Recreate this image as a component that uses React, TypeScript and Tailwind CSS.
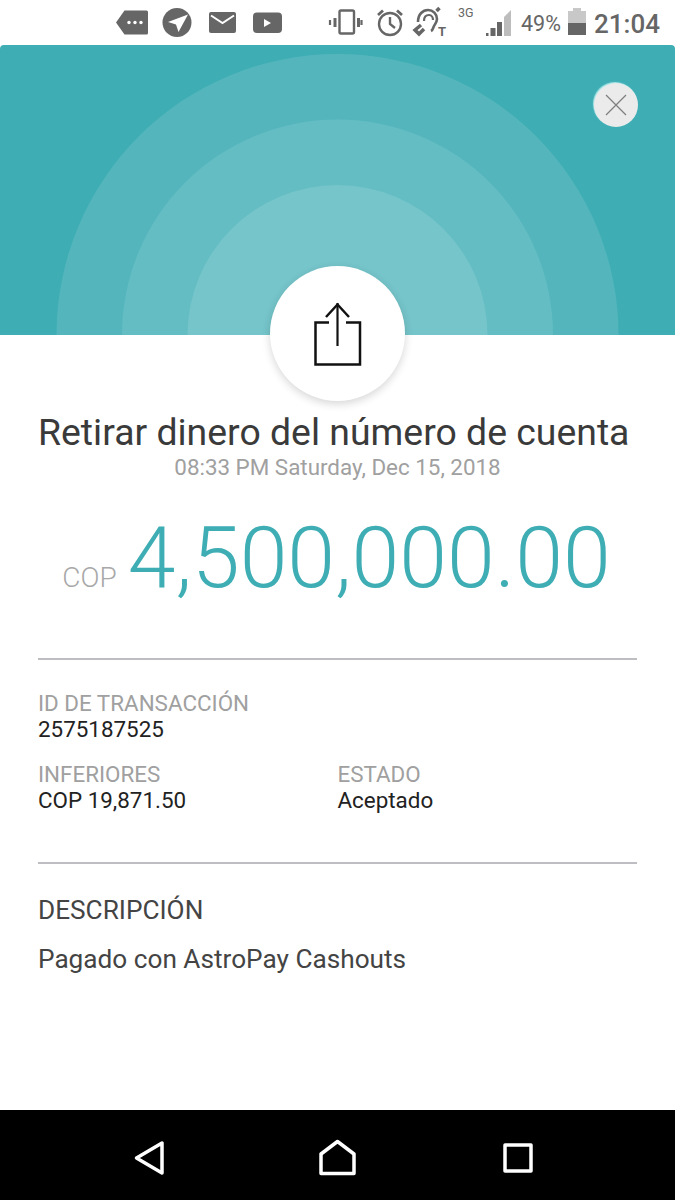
const G = "#666666";

function StatusIcons() {
  return (
    <svg width="342" height="45" viewBox="0 0 342 45" className="shrink-0">
      <path d="M116 22.500 L124.500 10.500 H146.500 a1.500 1.500 0 0 1 1.500 1.500 V33 a1.500 1.500 0 0 1 -1.500 1.500 H124.500 Z" fill={G} />
      <circle cx="129" cy="22.500" r="1.700" fill="#fff" /><circle cx="135" cy="22.500" r="1.700" fill="#fff" /><circle cx="141" cy="22.500" r="1.700" fill="#fff" />
      <circle cx="177" cy="22.500" r="14.500" fill={G} />
      <path d="M168 22 L188 14.500 L178.500 32 L176 24.500 Z" fill="#fff" />
      <rect x="209" y="12" width="27" height="21" rx="2" fill={G} />
      <path d="M211 15.500 L222.500 23 L234 15.500" fill="none" stroke="#fff" strokeWidth="2" />
      <rect x="253" y="12.500" width="29" height="20.500" rx="4" fill={G} />
      <path d="M264 19 L271 23 L264 27 Z" fill="#fff" />
    </svg>
  );
}

function Status2() {
  return (
    <svg width="120" height="45" viewBox="327 0 120 45" className="shrink-0">
      <g fill="none" stroke={G} strokeWidth="2.400">
        <rect x="339.500" y="10.500" width="14.500" height="23" rx="1.500" />
        <path d="M335 18v9M358.500 18v9" strokeWidth="3" />
        <path d="M330 20v5M361.500 20v5" strokeWidth="2.200" />
        <circle cx="390" cy="24" r="11" />
        <path d="M390 17v7l5 4" />
        <path d="M378 15l5-4.500M397 10.500l5 4.500" strokeWidth="2.800" />
        <path d="M418 22c0-8 5-12 10-12 5 0 9 4 9 9 0 3-2 5-3 7-1 2-1 4-3 5" strokeWidth="2.600" />
        <path d="M424 21c0-4 2-6 5-6s4 3 4 5" strokeWidth="2.200" />
        <path d="M421 25l-6 5 4 4 5-5" strokeWidth="3.500" />
        <path d="M436.500 11l3-3" strokeWidth="3.500" />
      </g>
    </svg>
  );
}

function Signal() {
  return (
    <svg width="26" height="26" viewBox="0 0 26 26" className="shrink-0">
      <rect x="0" y="23" width="2.500" height="3" fill={G} />
      <rect x="4.500" y="18" width="5" height="8" fill={G} />
      <rect x="11" y="12" width="5" height="14" fill={G} />
      <path d="M18 7 L25 0 V26 H18 Z" fill="#bdbdbd" />
    </svg>
  );
}

export default function App() {
  return (
    <div className="flex h-[1200px] w-[675px] flex-col overflow-hidden bg-white font-['Roboto',sans-serif]">
      <div className="relative flex h-[45px] shrink-0 items-center bg-white">
        <div className="absolute left-0 top-0"><StatusIcons /></div>
        <div className="absolute left-[327px] top-0"><Status2 /></div>
        <span className="absolute left-[438px] top-[26px] text-[13px] font-bold leading-[12px] text-[#666]">T</span>
        <span className="absolute left-[458px] top-[6px] text-[12.500px] leading-[14px] text-[#666]">3G</span>
        <div className="absolute left-[486px] top-[10px]"><Signal /></div>
        <span className="absolute left-[521px] top-[11px] text-[21.500px] leading-[26px] text-[#666]">49%</span>
        <svg width="18" height="27" viewBox="0 0 18 27" className="absolute left-[568px] top-[8px]">
          <path d="M5 0h8v3h5v24H0V3h5z" fill="#c8c8c8" />
          <rect x="0" y="15" width="18" height="12" fill={G} />
        </svg>
        <span className="absolute left-[594px] top-[8px] text-[26px] font-medium leading-[32px] text-[#666]">21:04</span>
      </div>

      <div className="flex min-h-0 flex-1 flex-col overflow-hidden rounded-t-[4px] bg-white">
        <div className="relative h-[290px] shrink-0 overflow-hidden bg-[#3eadb4]">
          <svg width="675" height="290" viewBox="0 0 675 290" className="absolute inset-0">
            <circle cx="337.500" cy="290" r="281" fill="#54b6bc" />
            <circle cx="337.500" cy="290" r="215.500" fill="#64bdc3" />
            <circle cx="337.500" cy="290" r="150" fill="#75c5ca" />
          </svg>
          <button className="absolute left-[594px] top-[38px] flex h-[44px] w-[44px] items-center justify-center rounded-full bg-[#ebebeb] shadow-[-1px_-1px_1px_rgba(200,245,245,0.8)]">
            <svg width="22" height="22" viewBox="0 0 22 22">
              <path d="M1 1 L21 21 M21 1 L1 21" stroke="#808080" strokeWidth="1.300" />
            </svg>
          </button>
        </div>

        <div className="relative flex flex-1 flex-col px-[38px]">
          <div className="absolute left-[270px] top-[-69px] flex h-[135px] w-[135px] items-center justify-center rounded-full bg-white shadow-[0_3px_8px_rgba(0,0,0,0.16)]">
            <svg width="48" height="64" viewBox="0 0 48 64" fill="none" stroke="#111" strokeWidth="2.200">
              <path d="M15 20.500 H1.500 V62.500 H46 V20.500 H32" strokeWidth="2.500" />
              <path d="M23.500 1 V44" />
              <path d="M12 15 L23.500 2.500 L35 15" strokeWidth="2.500" />
            </svg>
          </div>

          <div className="mt-[73px] whitespace-nowrap text-[37.400px] leading-[48px] text-[#3a3a3a]">Retirar dinero del número de cuenta</div>
          <div className="-mt-px text-center text-[22.400px] leading-[24px] text-[#a0a0a0]">08:33 PM Saturday, Dec 15, 2018</div>

          <div className="mt-[29px] flex h-[100px] items-baseline justify-center pr-[2px]">
            <span className="mr-[11px] text-[28px] font-light text-[#a8a8a8]">COP</span>
            <span className="text-[86px] font-light leading-[100px] text-[#3eadb4]">4,500,000.00</span>
          </div>

          <div className="mt-[50px] h-[2px] bg-[#bdbdc2]" />

          <div className="mt-[30px] text-[22.400px] leading-[26px] text-[#a0a0a0]">ID DE TRANSACCIÓN</div>
          <div className="text-[22.400px] leading-[26px] text-[#222]">2575187525</div>

          <div className="mt-[19px] grid grid-cols-2">
            <div>
              <div className="text-[22.400px] leading-[26px] text-[#a0a0a0]">INFERIORES</div>
              <div className="text-[22.400px] leading-[26px] text-[#222]">COP 19,871.50</div>
            </div>
            <div>
              <div className="text-[22.400px] leading-[26px] text-[#a0a0a0]">ESTADO</div>
              <div className="text-[22.400px] leading-[26px] text-[#222]">Aceptado</div>
            </div>
          </div>

          <div className="mt-[49px] h-[2px] bg-[#bdbdc2]" />

          <div className="mt-[31px] text-[26.200px] leading-[30px] text-[#444]">DESCRIPCIÓN</div>
          <div className="mt-[19px] text-[26.200px] leading-[30px] text-[#444]">Pagado con AstroPay Cashouts</div>
        </div>
      </div>

      <div className="flex h-[90px] shrink-0 items-center bg-black">
        <svg width="675" height="90" viewBox="0 0 675 90" fill="none" stroke="#fff" strokeWidth="3.500" strokeLinejoin="round">
          <path d="M162 33 V63 L136.500 48 Z" />
          <path d="M321 63.500 V44 L337.500 31.500 L354 44 V63.500 Z" />
          <rect x="505" y="35" width="26" height="26" />
        </svg>
      </div>
    </div>
  );
}
